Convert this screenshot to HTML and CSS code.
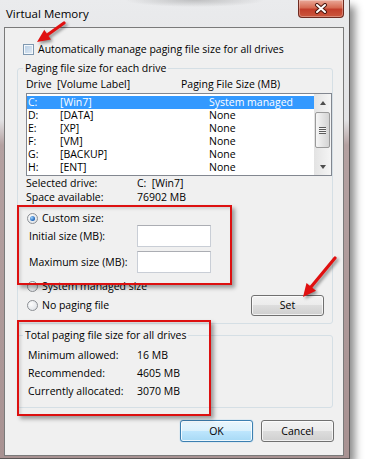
FILE: index.html
```html
<!DOCTYPE html>
<html lang="en">
<head>
  <meta charset="UTF-8">
  <title>Virtual Memory</title>
  <link rel="stylesheet" href="styles.css">
</head>
<body>

  <div class="window">
    <div class="titlebar">
      <span class="title">Virtual Memory</span>
      <div class="close-btn">
        <svg width="14" height="11" viewBox="0 0 14 11">
          <path d="M3 2 L11 9 M11 2 L3 9" stroke="#4b1810" stroke-width="4" stroke-linecap="round"/>
          <path d="M3 2 L11 9 M11 2 L3 9" stroke="#fff" stroke-width="2" stroke-linecap="round"/>
        </svg>
      </div>
    </div>

    <div class="client">
      <!-- Auto manage checkbox -->
      <div class="check-row">
        <span class="checkbox"></span>
        <span>Automatically manage paging file size for all drives</span>
      </div>

      <!-- Per drive settings -->
      <fieldset class="group group-drives">
        <legend>Paging file size for each drive</legend>
        <div class="list-head">
          <span>Drive</span>
          <span>[Volume Label]</span>
          <span>Paging File Size (MB)</span>
        </div>

        <div class="listbox">
          <div class="rows">
            <div class="row selected"><span>C:</span><span>[Win7]</span><span>System managed</span></div>
            <div class="row"><span>D:</span><span>[DATA]</span><span>None</span></div>
            <div class="row"><span>E:</span><span>[XP]</span><span>None</span></div>
            <div class="row"><span>F:</span><span>[VM]</span><span>None</span></div>
            <div class="row"><span>G:</span><span>[BACKUP]</span><span>None</span></div>
            <div class="row"><span>H:</span><span>[ENT]</span><span>None</span></div>
          </div>
          <div class="scrollbar">
            <div class="sb-btn"><span class="tri-up"></span></div>
            <div class="sb-thumb"><span class="grip"></span></div>
            <div class="sb-btn sb-down"><span class="tri-down"></span></div>
          </div>
        </div>

        <div class="info-row"><span class="info-label">Selected drive:</span><span>C:&nbsp; [Win7]</span></div>
        <div class="info-row"><span class="info-label">Space available:</span><span>76902 MB</span></div>

        <div class="radio-row custom-row"><span class="radio checked"></span><span>Custom size:</span></div>
        <div class="field-row"><span class="field-label">Initial size (MB):</span><span class="textbox"></span></div>
        <div class="field-row field-max"><span class="field-label">Maximum size (MB):</span><span class="textbox"></span></div>
        <div class="radio-row system-row"><span class="radio"></span><span>System managed size</span></div>
        <div class="radio-row set-row">
          <span class="radio"></span><span>No paging file</span>
          <button class="btn btn-set">Set</button>
        </div>
      </fieldset>

      <!-- Totals -->
      <fieldset class="group group-total">
        <legend>Total paging file size for all drives</legend>
        <div class="total-row first"><span class="total-label">Minimum allowed:</span><span>16 MB</span></div>
        <div class="total-row"><span class="total-label">Recommended:</span><span>4605 MB</span></div>
        <div class="total-row"><span class="total-label">Currently allocated:</span><span>3070 MB</span></div>
      </fieldset>

      <div class="dialog-buttons">
        <button class="btn btn-default">OK</button>
        <button class="btn">Cancel</button>
      </div>
    </div>

    <!-- Red annotations -->
    <div class="mark mark-custom"></div>
    <div class="mark mark-total"></div>
    <svg class="arrows" width="350" height="459" viewBox="0 0 350 459">
      <path d="M64 23 L48 34.5" stroke="#e01010" stroke-width="3.2" stroke-linecap="round"/>
      <polygon points="37,42 51,39.5 44.3,29.7" fill="#e01010"/>
      <path d="M335 258 L311 287" stroke="#e01010" stroke-width="3.2" stroke-linecap="round"/>
      <polygon points="303,297 316,290.7 306.5,283" fill="#e01010"/>
    </svg>
  </div>

</body>
</html>
```

FILE: styles.css
```css
/* Base */
* {
  margin: 0;
  padding: 0;
  box-sizing: border-box;
}

body {
  background: #fff;
  font-family: "Open Sans", "Noto Sans", sans-serif;
  font-size: 10.5px;
  color: #000;
}

/* Window frame */
.window {
  position: relative;
  width: 350px;
  height: 459px;
  border-right: 1px solid #5a5656;
  border-bottom: 1px solid #5a5656;
  background:
    radial-gradient(ellipse 70px 7px at 195px 0, rgba(60, 60, 60, 0.25), transparent),
    linear-gradient(to bottom, #eaebed 0, #e2e2e4 120px, #b4a1a1 145px, #a89292 100%);
  box-shadow: 5px 6px 8px rgba(0, 0, 0, 0.45);
}

.titlebar {
  display: flex;
  height: 27px;
  padding-left: 6px;
}

.title {
  font-size: 11.5px;
  line-height: 27px;
}

.close-btn {
  margin-left: auto;
  margin-right: 5px;
  width: 46px;
  height: 18px;
  border: 1px solid #6e2a20;
  border-top: none;
  border-radius: 0 0 4px 4px;
  background: linear-gradient(#eaa999, #d66b53 45%, #c23e2b 55%, #cb573e);
  box-shadow: inset 0 0 0 1px rgba(255, 255, 255, 0.3);
  display: flex;
  align-items: center;
  justify-content: center;
}

/* Client area */
.client {
  margin-left: 4px;
  width: 340px;
  height: 429px;
  border: 1px solid #7a7a7a;
  background: #f0f0f0;
  padding: 15px 9px 0 12px;
}

.check-row {
  display: flex;
  align-items: center;
  gap: 4px;
  height: 12px;
  padding-left: 6px;
}

.checkbox {
  width: 11px;
  height: 11px;
  border: 1px solid #7f98b0;
  background: linear-gradient(135deg, #b3cbe3, #e4edf6);
  box-shadow: inset 0 0 0 1px #f4f8fb;
}

/* Group boxes */
.group {
  border: 1px solid #d5dfe5;
  border-radius: 3px;
  margin-right: 1px;
  padding: 0 0 7px 8px;
  min-width: 0;
}

.group legend {
  padding: 0 2px;
  margin-left: -3px;
  line-height: 14px;
}

.group-drives {
  margin-top: 6px;
}

.group-total {
  margin-top: 4px;
}

.list-head {
  display: grid;
  grid-template-columns: 31px 124px 1fr;
  line-height: 14px;
  margin-top: 2px;
}

/* List box */
.listbox {
  display: flex;
  height: 83px;
  margin-top: 2px;
  border: 1px solid #828790;
  background: #fff;
}

.rows {
  flex: 1;
  padding-top: 2px;
}

.row {
  display: grid;
  grid-template-columns: 32px 149px 1fr;
  height: 13px;
  line-height: 13px;
  padding-left: 1px;
}

.row.selected {
  background: #3399ff;
  color: #fff;
}

.scrollbar {
  width: 17px;
  display: flex;
  flex-direction: column;
  background: linear-gradient(to right, #e3e3e3, #f5f5f5);
}

.sb-btn {
  height: 17px;
  display: flex;
  align-items: center;
  justify-content: center;
}

.sb-down {
  margin-top: auto;
}

.tri-up {
  border-left: 3.5px solid transparent;
  border-right: 3.5px solid transparent;
  border-bottom: 4px solid #4d4d4d;
}

.tri-down {
  border-left: 3.5px solid transparent;
  border-right: 3.5px solid transparent;
  border-top: 4px solid #4d4d4d;
}

.sb-thumb {
  height: 36px;
  margin: 1px 1px 0;
  border: 1px solid #9a9a9a;
  border-radius: 2px;
  background: linear-gradient(to right, #f6f6f6, #e4e4e4 50%, #d4d4d4);
  display: flex;
  align-items: center;
  justify-content: center;
}

.grip {
  width: 7px;
  height: 7px;
  background: repeating-linear-gradient(to bottom, #5c5c5c 0, #5c5c5c 1px, #f4f4f4 1px, #f4f4f4 2px);
}

/* Selected drive info */
.info-row {
  display: flex;
  line-height: 14px;
}

.info-row:first-of-type {
  margin-top: 2px;
}

.info-label {
  width: 111px;
}

/* Radio buttons and fields */
.radio-row {
  display: flex;
  align-items: center;
  gap: 4px;
  padding-left: 1px;
  height: 14px;
}

.custom-row {
  margin-top: 7px;
}

.system-row {
  margin-top: 6px;
}

.set-row {
  height: 22px;
  margin-top: 1px;
}

.radio {
  width: 11px;
  height: 11px;
  border: 1px solid #8c8f94;
  border-radius: 50%;
  background: radial-gradient(circle at 35% 35%, #fdfdfd, #d9dde2);
  position: relative;
}

.radio.checked::after {
  content: "";
  position: absolute;
  left: 2px;
  top: 2px;
  width: 5px;
  height: 5px;
  border-radius: 50%;
  background: radial-gradient(circle at 35% 35%, #9fd4ff, #1a5fb4 70%);
}

.field-row {
  display: flex;
  align-items: center;
  height: 22px;
  padding-left: 3px;
}

.field-max {
  margin-top: 4px;
}

.field-label {
  width: 108px;
}

.textbox {
  width: 74px;
  height: 22px;
  background: #fff;
  border: 1px solid #c9ced6;
  border-top-color: #abadb3;
}

/* Buttons */
.btn {
  width: 73px;
  height: 21px;
  font-family: inherit;
  font-size: 10.5px;
  color: #000;
  border: 1px solid #707070;
  border-radius: 3px;
  background: linear-gradient(#f2f2f2, #ebebeb 50%, #dddddd 50%, #cfcfcf);
  box-shadow: inset 0 0 0 1px rgba(255, 255, 255, 0.7);
}

.btn-set {
  margin-left: auto;
  margin-right: 8px;
}

.btn-default {
  border-color: #3c7fb1;
  background: linear-gradient(#eaf6fd, #d9f0fc 50%, #bee6fd 50%, #a7d9f5);
  box-shadow: inset 0 0 0 1px rgba(255, 255, 255, 0.8), 0 0 1px #48a8e6;
}

/* Totals */
.total-row {
  display: flex;
  line-height: 18px;
  padding-left: 2px;
}

.total-row.first {
  margin-top: 4px;
}

.total-label {
  width: 109px;
}

.dialog-buttons {
  display: flex;
  justify-content: flex-end;
  gap: 8px;
  margin-top: 12px;
}

.dialog-buttons .btn {
  height: 22px;
}

/* Annotation overlays */
.mark {
  position: absolute;
  left: 17px;
  border: 2px solid #dd1010;
  box-shadow: 3px 3px 4px rgba(0, 0, 0, 0.35), inset 2px 2px 3px rgba(0, 0, 0, 0.12);
  pointer-events: none;
}

.mark-custom {
  top: 205px;
  width: 215px;
  height: 80px;
}

.mark-total {
  top: 320px;
  width: 194px;
  height: 96px;
}

.arrows {
  position: absolute;
  left: 0;
  top: 0;
  pointer-events: none;
  filter: drop-shadow(2px 2px 1.5px rgba(0, 0, 0, 0.4));
}
```
